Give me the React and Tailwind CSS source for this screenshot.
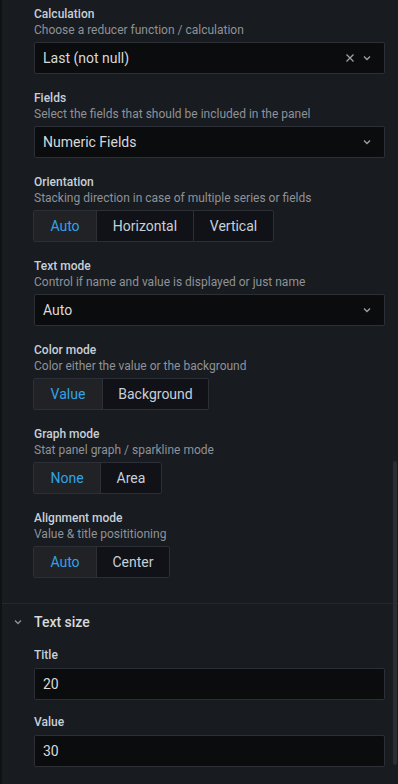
import React from "react";

const Chevron = ({ className = "" }) => (
  <svg width="10" height="10" viewBox="0 0 10 10" className={className}>
    <path d="M2 3.5 L5 6.5 L8 3.5" fill="none" stroke="currentColor" strokeWidth="1.3" />
  </svg>
);

const Cross = () => (
  <svg width="10" height="10" viewBox="0 0 10 10">
    <path d="M1.5 1.5 L8.5 8.5 M8.5 1.5 L1.5 8.5" fill="none" stroke="currentColor" strokeWidth="1.3" />
  </svg>
);

function Field({ label, desc, children }) {
  return (
    <div className="mb-4">
      <div className="text-[12px] leading-4 font-medium text-[#c7d0d9]">{label}</div>
      {desc && <div className="text-[12px] leading-4 text-[#8e9299]">{desc}</div>}
      <div className="mt-[4px]">{children}</div>
    </div>
  );
}

function Select({ value, clearable }) {
  return (
    <div className="h-[32px] w-[351px] flex items-center bg-[#0b0c0e] border border-[#2c2f35] rounded-[2px] pl-2 pr-3">
      <span className="flex-1 text-[14px] text-[#d8d9da]">{value}</span>
      {clearable && (
        <span className="text-[#9fa2a7] mr-[7px] flex">
          <Cross />
        </span>
      )}
      <span className="text-[#9fa2a7] flex">
        <Chevron />
      </span>
    </div>
  );
}

function Radio({ options, widths }) {
  return (
    <div className="flex h-[32px] border border-[#2c2f35] rounded-[2px] w-fit overflow-hidden ml-[-1px]">
      {options.map((o, i) => (
        <div
          key={o}
          style={{ width: widths[i] }}
          className={
            "flex items-center justify-center text-[14px] " +
            (i > 0 ? "border-l border-[#2c2f35] " : "") +
            (i === 0 ? "bg-[#202226] text-[#33a2e5]" : "bg-[#111217] text-[#c7d0d9]")
          }
        >
          {o}
        </div>
      ))}
    </div>
  );
}

function Input({ value }) {
  return (
    <div className="h-[32px] w-[351px] flex items-center bg-[#0b0c0e] border border-[#2c2f35] rounded-[2px] pl-2">
      <span className="text-[14px] text-[#d8d9da]">{value}</span>
    </div>
  );
}

export default function App() {
  return (
    <div
      className="relative w-[398px] h-[784px] bg-[#181b1f] border-l-2 border-[#111214] overflow-hidden"
      style={{ fontFamily: "Roboto, 'Liberation Sans', sans-serif" }}
    >
      <div className="pl-[32px] pt-[6px] pb-[9px]">
        <Field label="Calculation" desc="Choose a reducer function / calculation">
          <Select value="Last (not null)" clearable />
        </Field>
        <Field label="Fields" desc="Select the fields that should be included in the panel">
          <Select value="Numeric Fields" />
        </Field>
        <Field label="Orientation" desc="Stacking direction in case of multiple series or fields">
          <Radio options={["Auto", "Horizontal", "Vertical"]} widths={[62, 97, 80]} />
        </Field>
        <Field label="Text mode" desc="Control if name and value is displayed or just name">
          <Select value="Auto" />
        </Field>
        <Field label="Color mode" desc="Color either the value or the background">
          <Radio options={["Value", "Background"]} widths={[68, 106]} />
        </Field>
        <Field label="Graph mode" desc="Stat panel graph / sparkline mode">
          <Radio options={["None", "Area"]} widths={[66, 61]} />
        </Field>
        <Field label="Alignment mode" desc="Value & title posititioning">
          <Radio options={["Auto", "Center"]} widths={[62, 73]} />
        </Field>
      </div>

      <div className="border-t border-[#25272b]">
        <div className="flex items-center h-[36px]">
          <span className="text-[#8e9299] w-[32px] flex justify-center">
            <Chevron />
          </span>
          <span className="text-[14px] font-medium text-[#d8d9da]">Text size</span>
        </div>
        <div className="pl-[32px] pt-[7px]">
          <div>
            <div className="text-[12px] leading-4 font-medium text-[#c7d0d9]">Title</div>
            <div className="mt-[5px]">
              <Input value="20" />
            </div>
          </div>
          <div className="mt-[14px]">
            <div className="text-[12px] leading-4 font-medium text-[#c7d0d9]">Value</div>
            <div className="mt-[5px]">
              <Input value="30" />
            </div>
          </div>
        </div>
      </div>

      <div className="absolute right-[1px] top-[461px] w-[4px] h-[304px] rounded-sm bg-[#2a2d31]" />
    </div>
  );
}
